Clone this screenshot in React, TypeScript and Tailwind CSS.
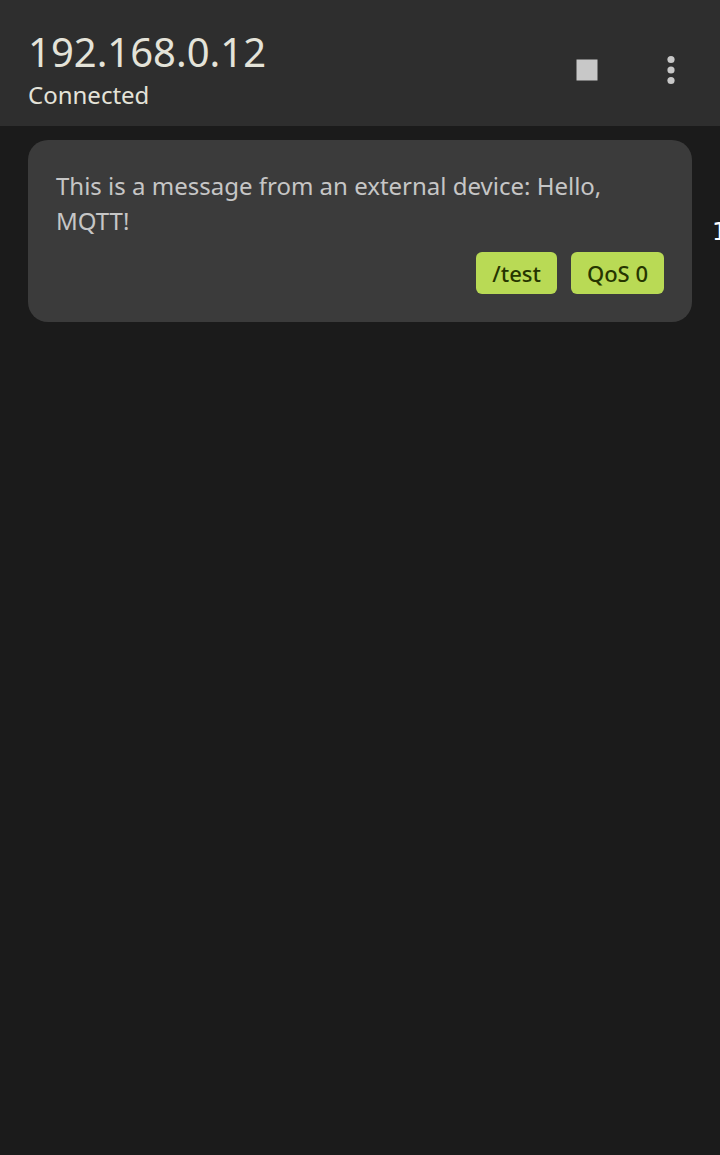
import React from "react";

type Message = { body: string; topic: string; qos: number };

const messages: Message[] = [
  {
    body: "This is a message from an external device: Hello, MQTT!",
    topic: "/test",
    qos: 0,
  },
];

function Tag({ children }: { children: React.ReactNode }) {
  return (
    <span className="flex h-[42px] items-center rounded-md bg-[#b9da55] px-4 text-[22px] font-medium text-[#263500]">
      {children}
    </span>
  );
}

function MessageCard({ body, topic, qos }: Message) {
  return (
    <article className="rounded-[20px] bg-[#3b3b3b] p-7">
      <p className="text-[24px] leading-[35px] text-[#c6c6c6]">{body}</p>
      <div className="mt-3.5 flex justify-end gap-3.5">
        <Tag>{topic}</Tag>
        <Tag>QoS {qos}</Tag>
      </div>
    </article>
  );
}

export default function App() {
  return (
    <div className="relative flex min-h-screen flex-col overflow-hidden bg-[#1b1b1b] font-['Noto_Sans',sans-serif]">
      <header className="flex items-center justify-between bg-[#2e2e2e] pt-[27px] pr-[21px] pb-3.5 pl-7 text-[#e4e3d9]">
        <div>
          <h1 className="text-[40px] leading-[50px]">192.168.0.12</h1>
          <p className="text-[24px] leading-[35px]">Connected</p>
        </div>
        <div className="flex gap-7 text-[#c8c8c8]">
          <button aria-label="Disconnect" className="flex size-14 items-center justify-center">
            <svg viewBox="0 0 42 42" className="size-[42px]" fill="currentColor">
              <path d="M10.5 10.5h21v21h-21z" />
            </svg>
          </button>
          <button aria-label="More options" className="flex size-14 items-center justify-center">
            <svg viewBox="0 0 42 42" className="size-[42px]" fill="currentColor">
              <circle cx="21" cy="10.5" r="3.6" />
              <circle cx="21" cy="21" r="3.6" />
              <circle cx="21" cy="31.5" r="3.6" />
            </svg>
          </button>
        </div>
      </header>
      <main className="flex flex-col gap-3.5 px-7 py-3.5">
        {messages.map((message) => (
          <MessageCard key={message.topic} {...message} />
        ))}
      </main>
      <span className="absolute top-[215px] left-full -ml-2 font-['DejaVu_Sans',sans-serif] text-[24px] leading-[35px] text-white">
        1
      </span>
    </div>
  );
}
